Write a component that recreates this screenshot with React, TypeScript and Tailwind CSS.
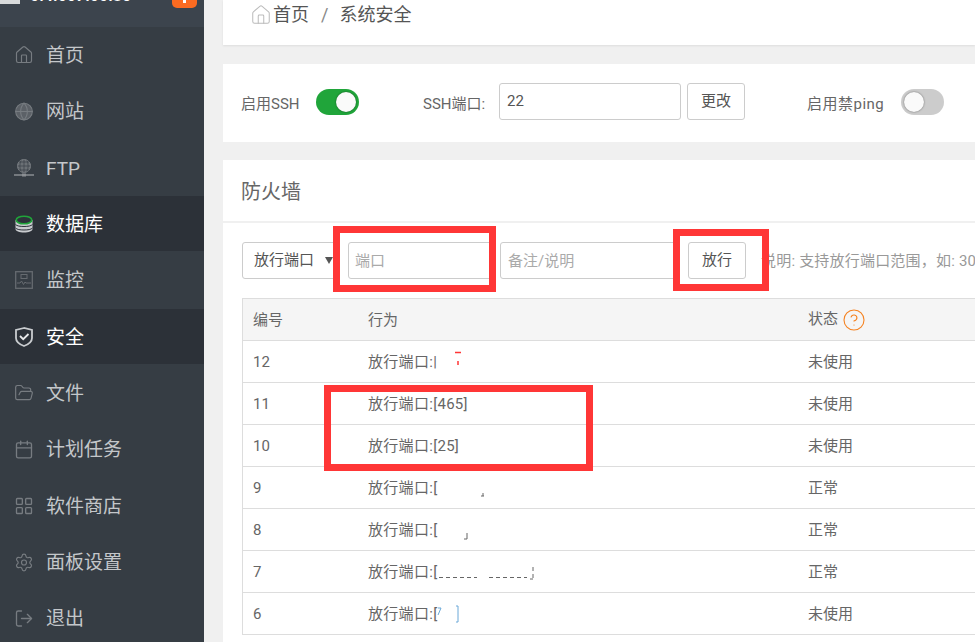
import { CircleHelp, House, Globe, Calendar, LayoutGrid, Settings, LogOut, FolderOpen } from "lucide-react";
import type { ReactNode } from "react";

const font = "[font-family:Roboto,'Noto_Sans_CJK_SC',sans-serif]";

function DbIcon() {
  return (
    <svg width="18" height="18" viewBox="0 0 18 18" fill="none">
      <path d="M0.5 5v9c0 2 3.8 3.5 8.500 3.500s8.500-1.500 8.500-3.500V5z" fill="#c9cccf" />
      <path d="M0.5 9.500c1.500 1.500 4.500 2 8.500 2s7-.5 8.500-2M0.5 13c1.500 1.500 4.500 2 8.500 2s7-.5 8.500-2" stroke="#2e333b" strokeWidth="1" />
      <ellipse cx="9" cy="5" rx="7.800" ry="3.800" fill="#2e333b" stroke="#20a53a" strokeWidth="1.600" />
    </svg>
  );
}

function FtpIcon() {
  return (
    <svg width="20" height="18" viewBox="0 0 20 18" fill="none" stroke="#7b8085" strokeWidth="1">
      <circle cx="10" cy="7" r="6.500" fill="#6b7075" />
      <path d="M3.500 7h13M10 .5v13M5 3h10M5 11h10M7 1.500c-1.500 3-1.500 8 0 11M13 1.500c1.500 3 1.500 8 0 11" stroke="#3a4148" strokeWidth="0.700" />
      <path d="M0 16h20" strokeWidth="1.500" stroke="#8a8e92" />
      <rect x="8" y="14.500" width="4" height="3" fill="#8a8e92" stroke="none" />
    </svg>
  );
}

function MonitorIcon() {
  return (
    <svg width="18" height="18" viewBox="0 0 18 18" fill="none" stroke="#666b70" strokeWidth="1.300">
      <rect x="0.700" y="0.700" width="16.600" height="16.600" />
      <path d="M2 12h3l1.500-2 2 3.500 1.500-2.500 1 1h5" strokeWidth="1" />
      <rect x="6" y="3.500" width="6" height="4" strokeWidth="1" />
    </svg>
  );
}

function ShieldIcon() {
  return (
    <svg width="18" height="20" viewBox="0 0 18 20" fill="none">
      <path d="M9 1 1 3v8c0 4 4 6.500 8 8 4-1.500 8-4 8-8V3z" stroke="#c9cccf" strokeWidth="1.800" />
      <path d="m5 9 3.200 3.200L13.500 7" stroke="#e8e9ea" strokeWidth="1.800" />
    </svg>
  );
}

const menu: { label: string; icon: ReactNode; active?: boolean; h: string }[] = [
  { label: "首页", icon: <House size={22} strokeWidth={1.400} color="#777c81" />, h: "h-[56px]" },
  { label: "网站", icon: <Globe size={21} strokeWidth={1.300} color="#777c81" fill="#5c6167" />, h: "h-[56px]" },
  { label: "FTP", icon: <FtpIcon />, h: "h-[57px]" },
  { label: "数据库", icon: <DbIcon />, active: true, h: "h-[55px]" },
  { label: "监控", icon: <MonitorIcon />, h: "h-[58px]" },
  { label: "安全", icon: <ShieldIcon />, active: true, h: "h-[55px]" },
  { label: "文件", icon: <FolderOpen size={22} strokeWidth={1.400} color="#777c81" />, h: "h-[57px]" },
  { label: "计划任务", icon: <Calendar size={21} strokeWidth={1.600} color="#777c81" />, h: "h-[56px]" },
  { label: "软件商店", icon: <LayoutGrid size={22} strokeWidth={1.600} color="#777c81" />, h: "h-[57px]" },
  { label: "面板设置", icon: <Settings size={21} strokeWidth={1.400} color="#777c81" />, h: "h-[56px]" },
  { label: "退出", icon: <LogOut size={21} strokeWidth={1.600} color="#777c81" />, h: "h-[56px]" },
];

// bits of the address left over after the screenshot was scribbled out
const scraps: Record<string, ReactNode> = {
  "12": <path d="M18 5.500h6M21 14v4" stroke="#ff3636" strokeWidth="1.500" />,
  "9": <path d="M46 20v3M44 23h3" stroke="#666" strokeWidth="1" />,
  "8": <path d="M30 18v6M27 24h3" stroke="#666" strokeWidth="1" />,
  "7": <path d="M2 20.500h38M52 20.500h38M96 10v12M93 22h3" stroke="#666" strokeWidth="1" strokeDasharray="4 3" />,
  "6": <path d="M1 16l3-7h-3M19 7h2v16h-2" stroke="#6aa8d8" strokeWidth="1" />,
};

const rows = [
  { id: "12", port: ":|", status: "未使用" },
  { id: "11", port: ":[465]", status: "未使用" },
  { id: "10", port: ":[25]", status: "未使用" },
  { id: "9", port: ":[", status: "正常" },
  { id: "8", port: ":[", status: "正常" },
  { id: "7", port: ":[", status: "正常" },
  { id: "6", port: ":[", status: "未使用" },
];

function Sidebar() {
  return (
    <aside className="w-[204px] h-[642px] shrink-0 overflow-hidden bg-[#363d44]">
      <div className="h-[27px] bg-[#3c444d] flex items-start justify-between pr-[7px] overflow-hidden">
        <div className="flex items-end h-[4px] text-white text-[16px] font-bold leading-none">
          <span className="w-[20px] h-[4px] bg-white/80 mr-[10px]" />
          <span>0.4.007.00.85</span>
        </div>
        <span className="w-[25px] h-[8px] bg-[#fb6b21] rounded-b-[5px] flex justify-center">
          <span className="w-[3px] h-[3px] bg-white" />
        </span>
      </div>
      {menu.map((m) => (
        <div key={m.label} className={`${m.h} flex items-center pl-[14px] ${m.active ? "bg-[#2c3138] text-white" : "text-[#c4c7ca]"}`}>
          <span className="w-[20px] flex justify-center">{m.icon}</span>
          <span className="ml-[12px] pt-[3px] text-[19px]">{m.label}</span>
        </div>
      ))}
    </aside>
  );
}

function Toggle({ on }: { on: boolean }) {
  return (
    <span className={`w-[43px] h-[26px] mb-[2px] rounded-full flex items-center p-[3px] ${on ? "bg-[#20a53a] justify-end" : "bg-[#cccccc]"}`}>
      <span className="w-[20px] h-[20px] rounded-full bg-[#fafafa] shadow-[0_0_2px_rgba(0,0,0,0.5)]" />
    </span>
  );
}

export default function App() {
  return (
    <div className={`relative flex w-[975px] h-[642px] overflow-hidden bg-[#f0f0f0] ${font}`}>
      <Sidebar />
      <main className="flex-1 min-w-0 pl-[19px]">
        <div className="h-[45px] bg-white shadow-[0_1px_2px_rgba(0,0,0,0.08)] flex items-start pt-[3px] pl-[27px] text-[18px] text-[#555]">
          <House size={22} strokeWidth={1.100} color="#bbb" className="mt-[1px]" />
          <span className="ml-[1px] leading-[24px]">首页</span>
          <span className="ml-[12px] mr-[11px] leading-[24px] text-[#888]">/</span>
          <span className="leading-[24px]">系统安全</span>
        </div>

        <div className="mt-[19px] h-[78px] bg-white flex items-center pl-[18px] text-[15px] text-[#666] whitespace-nowrap">
          <span className="w-[60px] pt-[2px]">启用SSH</span>
          <span className="ml-[15px] flex"><Toggle on /></span>
          <span className="ml-[64px] w-[65px] pt-[2px]">SSH端口:</span>
          <span className="ml-[11px] mb-[3px] w-[182px] h-[37px] border border-[#ccc] rounded-[3px] flex items-center pl-[7px] text-[#555]">22</span>
          <button className="ml-[6px] mb-[3px] w-[58px] h-[37px] border border-[#ccc] rounded-[3px] text-[#555]">更改</button>
          <span className="ml-[62px] w-[78px] pt-[2px] tracking-[0.5px]">启用禁ping</span>
          <span className="ml-[16px] flex"><Toggle on={false} /></span>
        </div>

        <section className="mt-[18px] bg-white h-[500px]">
          <div className="h-[63px] pt-[2px] border-b-2 border-[#f0f0f0] flex items-center pl-[18px] text-[20px] text-[#666]">防火墙</div>
          <div className="flex items-center mt-[19px] ml-[19px] h-[37px] text-[15px] whitespace-nowrap">
            <div className="w-[98px] h-[37px] shrink-0 border border-[#ccc] rounded-[3px] flex items-center pl-[11px] text-[#555]">
              放行端口
              <svg className="ml-[11px]" width="8" height="7" viewBox="0 0 8 7"><path d="M0 0h8L4 7z" fill="#555" /></svg>
            </div>
            <div className="ml-[8px] w-[144px] h-[37px] pt-[1px] shrink-0 border border-[#ccc] rounded-[3px] flex items-center pl-[6px] text-[#aaa]">端口</div>
            <div className="ml-[8px] w-[178px] h-[37px] pt-[1px] shrink-0 border border-[#ccc] rounded-[3px] flex items-center pl-[7px] text-[#aaa]">备注/说明</div>
            <button className="ml-[10px] w-[58px] h-[37px] shrink-0 border border-[#ccc] rounded-[3px] text-[#555]">放行</button>
            <span className="ml-[15px] pt-[1px] tracking-[0.2px] text-[#999]">说明: 支持放行端口范围，如: 3000:3500</span>
          </div>
          <div className="mt-[19px] ml-[19px] border-l border-t border-[#ddd] text-[15px] text-[#666]">
            <div className="h-[42px] bg-[#f5f5f5] border-b border-[#ddd] flex items-center">
              <span className="w-[125px] pl-[10px] pt-[2px]">编号</span>
              <span className="w-[440px] pt-[2px]">行为</span>
              <span className="flex items-center gap-[4px]">状态<CircleHelp size={24} strokeWidth={1.100} color="#f58220" /></span>
            </div>
            {rows.map((r) => (
              <div key={r.id} className="h-[42px] border-b border-[#ddd] flex items-center">
                <span className="w-[125px] pl-[10px] pt-[2px]">{r.id}</span>
                <span className="w-[440px] flex items-center">
                  <span className="pt-[2px] tracking-[0.3px]">放行端口{r.port}</span>
                  {scraps[r.id] && (
                    <svg width="100" height="30" viewBox="0 0 100 30" fill="none">{scraps[r.id]}</svg>
                  )}
                </span>
                <span className="pt-[2px]">{r.status}</span>
              </div>
            ))}
          </div>
        </section>
      </main>

      {/* red annotation boxes drawn over the screenshot */}
      <div className="absolute left-[333px] top-[226px] w-[163px] h-[66px] border-[7px] border-[#ff3636]" />
      <div className="absolute left-[673px] top-[229px] w-[96px] h-[62px] border-[7px] border-[#ff3636]" />
      <div className="absolute left-[324px] top-[385px] w-[269px] h-[86px] border-[7px] border-[#ff3636]" />
    </div>
  );
}
